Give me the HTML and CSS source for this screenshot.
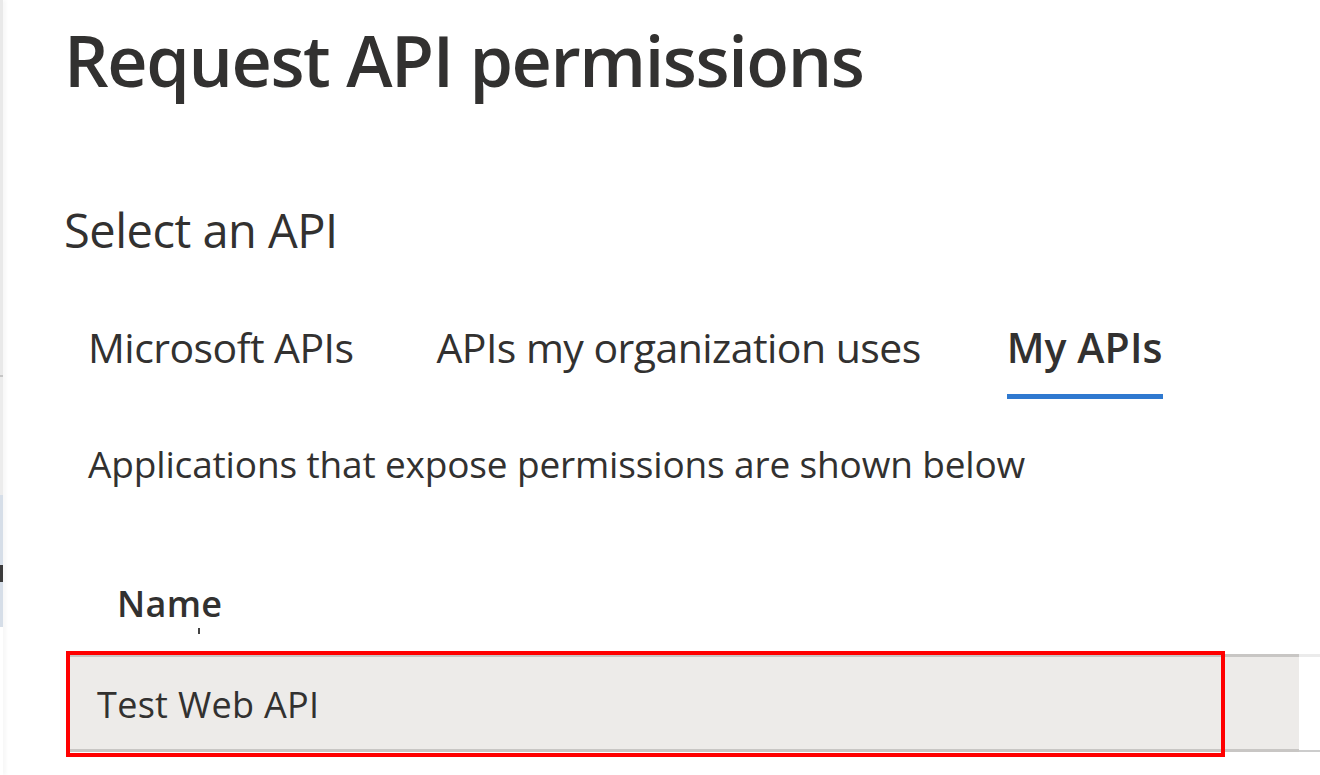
FILE: index.html
```html
<!DOCTYPE html>
<html>
<head>
<meta charset="utf-8">
<link rel="stylesheet" href="styles.css">
</head>
<body>
<div class="page">
  <div class="edge">
    <div class="edge-top"></div>
    <div class="edge-line"></div>
    <div class="edge-mid"></div>
    <div class="edge-blue"><div class="edge-glyph"></div></div>
    <div class="edge-rest"></div>
  </div>
  <div class="blade">
    <h1 class="title">Request API permissions</h1>
    <h2 class="subtitle">Select an API</h2>
    <div class="tabs">
      <div class="tab tab-1">Microsoft APIs</div>
      <div class="tab tab-2">APIs my organization uses</div>
      <div class="tab tab-3 active">My APIs</div>
    </div>
    <p class="desc">Applications that expose permissions are shown below</p>
    <div class="header">
      <span class="header-name">Name</span>
      <span class="header-tick"></span>
    </div>
    <div class="rows">
      <div class="row">
        <div class="cell-main">Test Web API</div>
        <div class="cell-rest"></div>
      </div>
      <div class="highlight"></div>
    </div>
  </div>
</div>
</body>
</html>
```

FILE: styles.css
```css
html, body {
  margin: 0;
  padding: 0;
  background: #ffffff;
}
body {
  width: 1320px;
  height: 775px;
  overflow: hidden;
  font-family: "Open Sans", "Noto Sans", sans-serif;
  color: #323130;
}
.page {
  display: flex;
  height: 775px;
}
.edge {
  width: 3px;
  display: flex;
  flex-direction: column;
  flex-shrink: 0;
  box-shadow: 2px 0 4px rgba(0,0,0,0.06);
}
.edge-top { height: 375px; background: #e9e9e9; }
.edge-line { height: 2px; background: #c6c6c6; }
.edge-mid { height: 118px; background: #ececec; }
.edge-blue {
  height: 132px;
  background: #d6dee8;
  display: flex;
  flex-direction: column;
  padding-top: 70px;
  box-sizing: border-box;
}
.edge-glyph { height: 17px; width: 3px; background: #3b3b3b; }
.edge-rest { flex: 1; background: #ffffff; }

.blade {
  flex: 1;
  padding-left: 61px;
  display: flex;
  flex-direction: column;
  position: relative;
}
.title {
  margin: 16px 0 0 0;
  font-size: 70px;
  line-height: 88px;
  font-weight: 600;
  letter-spacing: -1.4px;
}
.subtitle {
  margin: 98px 0 0 0;
  font-size: 47px;
  line-height: 56px;
  font-weight: 400;
  letter-spacing: -0.5px;
}
.tabs {
  margin-top: 64px;
  padding-left: 24px;
  display: flex;
}
.tab {
  font-size: 41px;
  line-height: 50px;
  padding-bottom: 22px;
  border-bottom: 5px solid transparent;
  letter-spacing: -0.55px;
}
.tab-2 { margin-left: 83px; }
.tab-3 { margin-left: 86px; }
.tab.active {
  font-weight: 600;
  letter-spacing: 0.1px;
  border-bottom-color: #2f79d0;
}
.desc {
  margin: 42px 0 0 24px;
  font-size: 37px;
  line-height: 46px;
  letter-spacing: -0.15px;
}
.header {
  margin: 95px 0 0 53px;
  height: 44px;
  position: relative;
  display: flex;
}
.header-name {
  font-size: 36px;
  line-height: 44px;
  font-weight: 600;
  letter-spacing: 0.3px;
}
.header-tick {
  position: absolute;
  left: 81px;
  top: 46px;
  width: 2px;
  height: 6px;
  background: #444;
}
.rows {
  margin-top: 28px;
  margin-left: 3px;
  position: relative;
}
.row {
  display: flex;
  height: 98px;
}
.cell-main {
  width: 1232px;
  box-sizing: border-box;
  background: #edebe9;
  border-top: 3px solid #c8c6c4;
  border-bottom: 3px solid #c8c6c4;
  padding: 4px 0 0 30px;
  font-size: 36px;
  line-height: 88px;
  letter-spacing: 0.3px;
}
.cell-rest {
  flex: 1;
  box-sizing: border-box;
  border-top: 3px solid #ebebeb;
  border-bottom: 2px solid #cccccc;
  background: #ffffff;
}
.highlight {
  position: absolute;
  left: -1px;
  top: -3px;
  width: 1159px;
  height: 106px;
  box-sizing: border-box;
  border: 4px solid #ff0000;
}
```
